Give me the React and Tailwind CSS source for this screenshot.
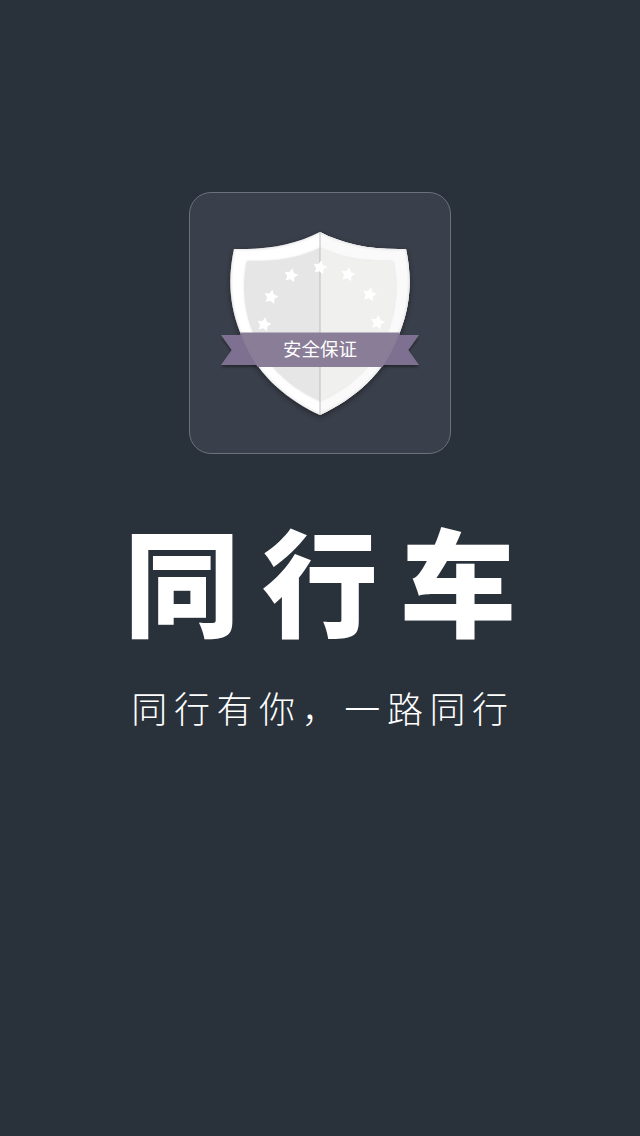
const stars = [[131,75.5],[102,83.5],[82,105],[75,132.5],[159,82.5],[180.5,102.5],[188.5,130.5]];
const starPoints = (cx, cy, r, rot) => {
  const pts = [];
  for (let i = 0; i < 10; i++) {
    const a = (Math.PI / 5) * i - Math.PI / 2 + rot;
    const rad = i % 2 === 0 ? r : r * 0.52;
    pts.push(`${(cx + rad * Math.cos(a)).toFixed(2)},${(cy + rad * Math.sin(a)).toFixed(2)}`);
  }
  return pts.join(" ");
};

function Shield() {
  const outer = "M131 40 C108 52 80 58 45 57 C39 85 40 112 51 140 C66 182 97 207 131 223 C165 207 196 182 211 140 C222 112 223 85 217 57 C182 58 154 52 131 40 Z";
  const inner = "M131 56 C110 66 88 70 58 69 C53 93 55 118 64 140 C77 174 100 195 131 209 C162 195 185 174 198 140 C207 118 209 93 204 69 C174 70 152 66 131 56 Z";
  return (
    <svg width="262" height="262" viewBox="0 0 262 262" className="block">
      <defs>
        <filter id="sh" x="-20%" y="-20%" width="140%" height="140%">
          <feDropShadow dx="0" dy="2" stdDeviation="3" floodColor="#000" floodOpacity="0.45" />
        </filter>
        <filter id="rs" x="-10%" y="-30%" width="120%" height="170%">
          <feDropShadow dx="0" dy="2" stdDeviation="1.5" floodColor="#000" floodOpacity="0.4" />
        </filter>
        <filter id="soft" x="-10%" y="-10%" width="120%" height="120%">
          <feGaussianBlur stdDeviation="1.2" />
        </filter>
        <clipPath id="lh"><rect x="0" y="0" width="131" height="262" /></clipPath>
        <clipPath id="rh"><rect x="131" y="0" width="131" height="262" /></clipPath>
        <clipPath id="so"><path d={outer} /></clipPath>
      </defs>
      <path d={outer} fill="#ffffff" filter="url(#sh)" />
      <path d={outer} fill="#fafafa" clipPath="url(#rh)" />
      <g clipPath="url(#so)">
        <path d={outer} fill="none" stroke="#dedede" strokeWidth="1.5" filter="url(#soft)" />
        <path d={inner} fill="#dcdcdc" filter="url(#soft)" />
      </g>
      <path d={inner} fill="#e6e6e6" clipPath="url(#lh)" />
      <path d={inner} fill="#f0f0ef" clipPath="url(#rh)" />
      <line x1="131" y1="40" x2="131" y2="223" stroke="#bdbdc0" strokeWidth="1" />
      {stars.map(([x, y], i) => (
        <polygon key={i} points={starPoints(x, y, 7.4, 0.2)} fill="#ffffff" />
      ))}
      <path d="M32 143 L54 143 L70 173 L32 173 L42.7 158 Z" fill="#7e7090" filter="url(#rs)" />
      <path d="M230 143 L208 143 L192 173 L230 173 L219.3 158 Z" fill="#7e7090" filter="url(#rs)" />
      <path d="M51 140.5 L211 140.5 C206 153 200 165 193.5 175 L68.5 175 C62 165 56 153 51 140.5 Z" fill="#8a7d98" />
    </svg>
  );
}

export default function App() {
  return (
    <div className="w-[640px] h-[1136px] bg-[#29313b] flex flex-col items-center pt-[192px] overflow-hidden" style={{ fontFamily: '"Noto Sans CJK SC", "Liberation Sans", sans-serif' }}>
      <div className="relative w-[262px] h-[262px] rounded-[22px] bg-[#3a404b] border border-[#6c717a] shrink-0">
        <div className="absolute -left-px -top-px">
          <Shield />
        </div>
        <span className="absolute left-[-1px] right-[-1px] top-[141px] text-center text-white text-[18.5px] leading-[28px]">安全保证</span>
      </div>
      <div className="mt-[59px] h-[128px] flex items-center justify-center text-white font-black text-[116px] leading-[128px] tracking-[22px] pl-[22px] whitespace-nowrap">同行车</div>
      <div className="mt-[42px] flex justify-center text-white font-light text-[36px] leading-[48px] tracking-[6.6px] pl-[6px] whitespace-nowrap">同行有你，一路同行</div>
    </div>
  );
}
